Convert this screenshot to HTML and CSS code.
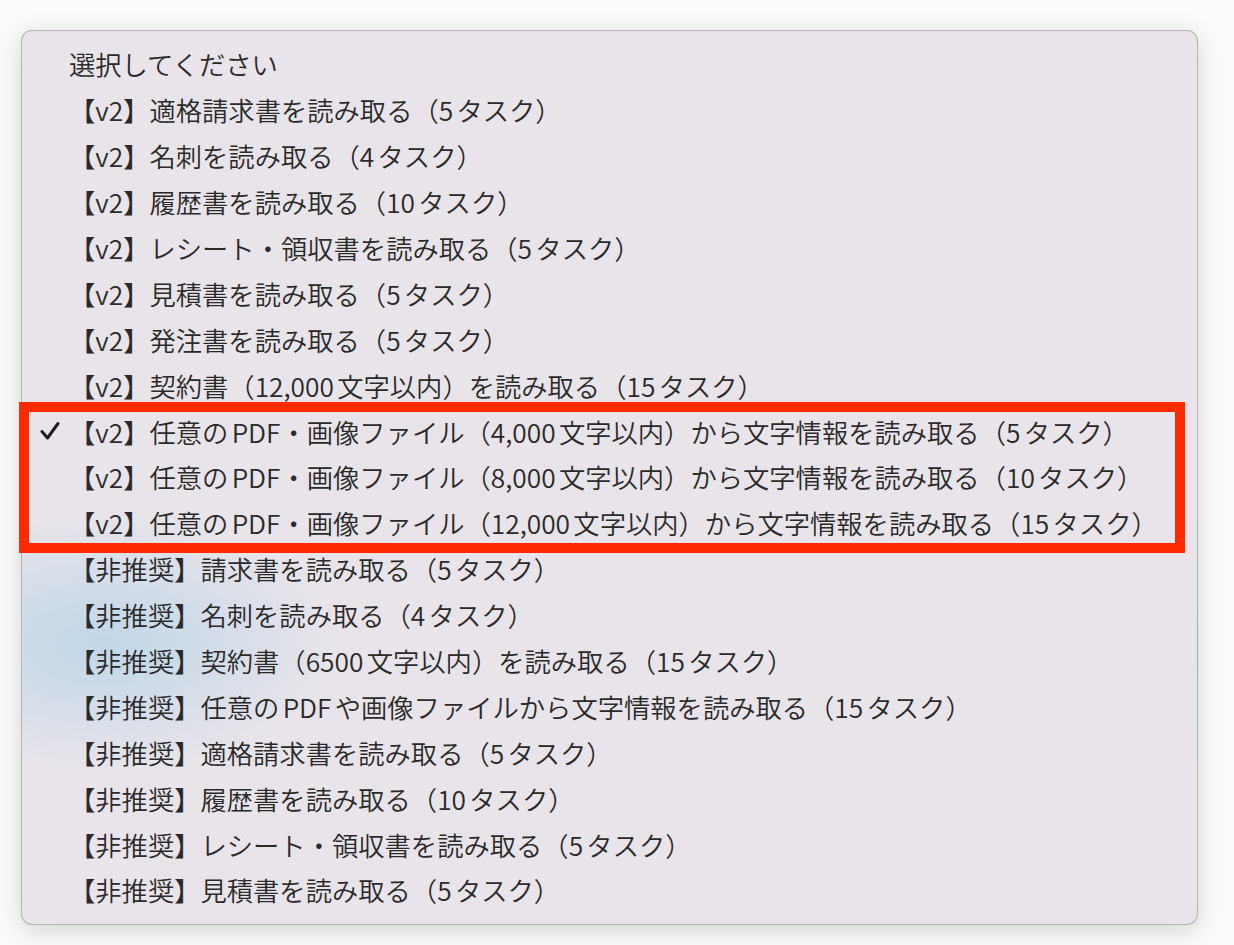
FILE: index.html
```html
<!DOCTYPE html>
<html lang="ja">
<head>
    <meta charset="UTF-8">
    <meta name="viewport" content="width=device-width, initial-scale=1.0">
    <title>読み取り設定</title>
    <link rel="stylesheet" href="styles.css">
</head>
<body>
    <div class="menu">
        <div class="menu-item placeholder"><span class="check"></span><span class="label">選択してください</span></div>
        <div class="menu-item"><span class="check"></span><span class="label">【v2】適格請求書を読み取る（5タスク）</span></div>
        <div class="menu-item"><span class="check"></span><span class="label">【v2】名刺を読み取る（4タスク）</span></div>
        <div class="menu-item"><span class="check"></span><span class="label">【v2】履歴書を読み取る（10タスク）</span></div>
        <div class="menu-item"><span class="check"></span><span class="label">【v2】レシート・領収書を読み取る（5タスク）</span></div>
        <div class="menu-item"><span class="check"></span><span class="label">【v2】見積書を読み取る（5タスク）</span></div>
        <div class="menu-item"><span class="check"></span><span class="label">【v2】発注書を読み取る（5タスク）</span></div>
        <div class="menu-item"><span class="check"></span><span class="label">【v2】契約書（12,000文字以内）を読み取る（15タスク）</span></div>

        <div class="highlight">
            <div class="menu-item selected">
                <span class="check">
                    <svg width="22" height="20" viewBox="0 0 22 20">
                        <path d="M3 10.5 L8.5 17 L19 2.5" fill="none" stroke="#1e1e1e" stroke-width="3" stroke-linecap="round" stroke-linejoin="round"/>
                    </svg>
                </span>
                <span class="label">【v2】任意のPDF・画像ファイル（4,000文字以内）から文字情報を読み取る（5タスク）</span>
            </div>
            <div class="menu-item"><span class="check"></span><span class="label">【v2】任意のPDF・画像ファイル（8,000文字以内）から文字情報を読み取る（10タスク）</span></div>
            <div class="menu-item"><span class="check"></span><span class="label">【v2】任意のPDF・画像ファイル（12,000文字以内）から文字情報を読み取る（15タスク）</span></div>
        </div>

        <div class="menu-item"><span class="check"></span><span class="label">【非推奨】請求書を読み取る（5タスク）</span></div>
        <div class="menu-item"><span class="check"></span><span class="label">【非推奨】名刺を読み取る（4タスク）</span></div>
        <div class="menu-item"><span class="check"></span><span class="label">【非推奨】契約書（6500文字以内）を読み取る（15タスク）</span></div>
        <div class="menu-item"><span class="check"></span><span class="label">【非推奨】任意のPDFや画像ファイルから文字情報を読み取る（15タスク）</span></div>
        <div class="menu-item"><span class="check"></span><span class="label">【非推奨】適格請求書を読み取る（5タスク）</span></div>
        <div class="menu-item"><span class="check"></span><span class="label">【非推奨】履歴書を読み取る（10タスク）</span></div>
        <div class="menu-item"><span class="check"></span><span class="label">【非推奨】レシート・領収書を読み取る（5タスク）</span></div>
        <div class="menu-item"><span class="check"></span><span class="label">【非推奨】見積書を読み取る（5タスク）</span></div>
    </div>
</body>
</html>
```

FILE: styles.css
```css
body {
    margin: 0;
    padding: 30px 0 0 21px;
    min-height: 100vh;
    box-sizing: border-box;
    font-family: "Noto Sans CJK JP", "Noto Sans", sans-serif;
    background-color: #fbfbfb;
}

.menu {
    width: 1177px;
    box-sizing: border-box;
    padding: 10px 0 11px 0;
    border: 1px solid rgba(0, 0, 0, 0.22);
    border-radius: 11px;
    background-color: #e9e4ea;
    background-image: radial-gradient(ellipse 240px 130px at 80px 612px, rgba(190, 214, 232, 0.95), rgba(190, 214, 232, 0));
    box-shadow: 0 6px 26px rgba(0, 0, 0, 0.16);
}

.menu-item {
    display: flex;
    align-items: center;
    height: 45.9px;
    font-size: 26.3px;
    font-weight: 350;
    color: #2a2a2a;
    white-space: nowrap;
    text-autospace: normal;
}

.check {
    width: 47px;
    flex-shrink: 0;
    display: flex;
    align-items: center;
    padding-left: 17px;
    box-sizing: border-box;
}

.highlight {
    position: relative;
}

.highlight::after {
    content: "";
    position: absolute;
    top: -6px;
    bottom: -7px;
    left: -3px;
    right: 12px;
    border: 10px solid #ff2a00;
    pointer-events: none;
}
```
